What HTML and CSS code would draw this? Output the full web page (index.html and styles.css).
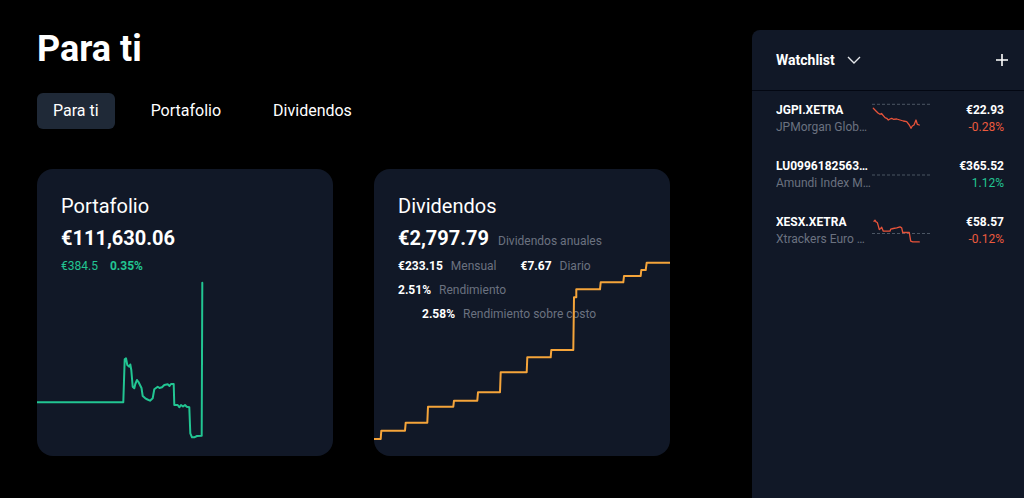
FILE: index.html
```html
<!DOCTYPE html>
<html lang="es">
<head>
<meta charset="utf-8">
<title>Para ti</title>
<link rel="stylesheet" href="styles.css">
</head>
<body>
<div class="page">
  <main class="main">
    <h1 class="title">Para ti</h1>
    <nav class="tabs">
      <button class="tab active">Para ti</button>
      <button class="tab">Portafolio</button>
      <button class="tab">Dividendos</button>
    </nav>
    <section class="cards">
      <article class="card">
        <h2 class="card-title">Portafolio</h2>
        <div class="card-value">€111,630.06</div>
        <div class="change green"><span>€384.5</span><b>0.35%</b></div>
        <svg class="chart" viewBox="0 0 296 287" preserveAspectRatio="none">
          <polyline class="line-green" points="0,233.3 86.3,233.3 87.7,190.3 89,189.3 90.3,196 92.3,197.7 93.3,195.5 94.3,201 95.7,217.7 97.3,219.3 98.3,215 100,211 101.5,213 103,216 104.5,219 105.7,227 108.3,229.3 110.5,230.5 113,231.7 115.7,229.3 117.3,220.3 120.7,217.7 122.5,219 125,218.3 127.3,216 130.7,215.3 132.5,217 134,215 136.7,215 137.3,236 140.7,236 142.3,238.3 144,236 146,237.5 148,236 149.7,237.7 152.3,238.3 153.3,264.3 155,268.3 157.3,268.3 160,267 164.7,266.7 165.3,113.7"/>
        </svg>
      </article>
      <article class="card">
        <h2 class="card-title">Dividendos</h2>
        <div class="card-value">€2,797.79<span class="muted value-label">Dividendos anuales</span></div>
        <div class="stat-line">
          <span class="stat"><b>€233.15</b><span class="muted">Mensual</span></span>
          <span class="stat"><b>€7.67</b><span class="muted">Diario</span></span>
        </div>
        <div class="stat-line">
          <span class="stat"><b>2.51%</b><span class="muted">Rendimiento</span></span>
        </div>
        <div class="stat-line indent">
          <span class="stat"><b>2.58%</b><span class="muted">Rendimiento sobre costo</span></span>
        </div>
        <svg class="chart" viewBox="0 0 296 287" preserveAspectRatio="none">
          <polyline class="line-orange" points="0,270 6.7,270 7.3,261.7 31,261.7 31.7,253.7 53.3,253.7 54,237.7 79.3,237.7 80,231.7 103.3,231.7 104,223.3 126,223.3 126.7,203.3 152.7,203.3 153.3,188.3 176.7,188.3 177.3,181 199.3,181 200,128.3 202.3,128.3 202.3,120.3 226,120.3 226.7,113.3 249.3,113.3 250,107 266.7,107 267.3,101 271.7,101 272.7,93.7 296,93.7"/>
        </svg>
      </article>
    </section>
  </main>

  <aside class="watchlist">
    <header class="wl-header">
      <span class="wl-title">Watchlist</span>
      <svg class="chevron" viewBox="0 0 14 8" width="14" height="8"><polyline points="1,1 7,7 13,1"/></svg>
      <svg class="plus" viewBox="0 0 12 12" width="12" height="12"><path d="M6 0V12M0 6H12"/></svg>
    </header>
    <div class="wl-row">
      <div class="wl-name">
        <div class="sym">JGPI.XETRA</div>
        <div class="desc">JPMorgan Global Equity Premium Income</div>
      </div>
      <svg class="spark" viewBox="0 0 60 32" width="60" height="32">
        <line class="ref" x1="0" y1="1.3" x2="60" y2="1.3"/>
        <polyline class="line-red" points="1.3,5.3 4.7,8.7 6.3,10.3 8,11.3 9.5,10.5 11.3,12.7 13,14.7 14.7,15.3 16.3,17 18,16 19.7,15.3 21.3,16.3 24.7,16 28,17 31.3,18 34.7,18.7 37.3,22 39,25.3 40.3,23 42,22 44,17 45.3,21.3 47.3,22"/>
      </svg>
      <div class="wl-price">
        <div class="price">€22.93</div>
        <div class="pct red">-0.28%</div>
      </div>
    </div>
    <div class="wl-row">
      <div class="wl-name">
        <div class="sym">LU0996182563.XETRA</div>
        <div class="desc">Amundi Index MSCI World</div>
      </div>
      <svg class="spark" viewBox="0 0 60 32" width="60" height="32">
        <line class="ref" x1="0" y1="16" x2="60" y2="16"/>
      </svg>
      <div class="wl-price">
        <div class="price">€365.52</div>
        <div class="pct green">1.12%</div>
      </div>
    </div>
    <div class="wl-row">
      <div class="wl-name">
        <div class="sym">XESX.XETRA</div>
        <div class="desc">Xtrackers Euro Stoxx 50</div>
      </div>
      <svg class="spark" viewBox="0 0 60 32" width="60" height="32">
        <line class="ref" x1="0" y1="18.5" x2="60" y2="18.5"/>
        <polyline class="line-red" points="2,6.2 3,5.2 4,6.9 5.3,7.5 6.3,10.9 7.3,14.5 8.7,13.5 9.7,12.2 11.3,16.2 18,16.2 18.7,14.2 21.3,13.5 24.7,12.9 28,11.9 29.7,12.9 30.7,17.5 37.3,17.5 38,21.9 38.7,26.2 40.7,26.9 47.3,26.9"/>
      </svg>
      <div class="wl-price">
        <div class="price">€58.57</div>
        <div class="pct red">-0.12%</div>
      </div>
    </div>
  </aside>
</div>
</body>
</html>
```

FILE: styles.css
```css
* { box-sizing: border-box; }

html, body {
  margin: 0;
  padding: 0;
  background: #000;
  color: #fff;
  font-family: Roboto, "Liberation Sans", Arial, sans-serif;
  height: 100%;
  overflow: hidden;
}

.page {
  display: flex;
  height: 100vh;
}

.main {
  flex: 1;
  padding: 27px 0 0 37px;
}

.title {
  margin: 0;
  font-size: 36px;
  line-height: 44px;
  font-weight: 700;
}

.tabs {
  display: flex;
  gap: 20px;
  margin-top: 22px;
}

.tab {
  height: 36px;
  padding: 0 16px;
  border: none;
  border-radius: 6px;
  background: transparent;
  color: #fff;
  font-family: inherit;
  font-size: 16px;
  line-height: 36px;
}

.tab.active {
  background: #1f2937;
}

.cards {
  display: flex;
  gap: 41px;
  margin-top: 40px;
}

.card {
  position: relative;
  width: 296px;
  height: 287px;
  padding: 23px 24px 0;
  background: #111827;
  border-radius: 16px;
  overflow: hidden;
}

.card-title {
  margin: 0;
  font-size: 20px;
  line-height: 28px;
  font-weight: 400;
}

.card-value {
  margin-top: 4px;
  height: 28px;
  font-size: 20px;
  line-height: 28px;
  font-weight: 700;
}

.value-label {
  margin-left: 9px;
  font-size: 12px;
  line-height: 1;
  font-weight: 400;
}

.muted {
  color: #6b7280;
}

.change {
  display: flex;
  gap: 12px;
  margin-top: 2px;
  font-size: 12px;
  line-height: 24px;
}

.stat-line {
  display: flex;
  gap: 24px;
  font-size: 12px;
  line-height: 24px;
}

.card-value + .stat-line { margin-top: 2px; }

.stat-line.indent { padding-left: 24px; }

.stat {
  display: flex;
  gap: 8px;
}

.chart {
  position: absolute;
  left: 0;
  top: 0;
  width: 296px;
  height: 287px;
  pointer-events: none;
}

.chart polyline, .spark polyline {
  fill: none;
  stroke-linejoin: round;
  stroke-linecap: round;
}

.line-green { stroke: #22c592; stroke-width: 2; }
.line-orange { stroke: #f5a43a; stroke-width: 2; }
.line-red { stroke: #e8533a; stroke-width: 1.3; }

.green { color: #22c592; }
.red { color: #ec5a3e; }

.watchlist {
  flex: none;
  width: 272px;
  margin-top: 30px;
  background: #111827;
  border-top-left-radius: 8px;
}

.wl-header {
  display: flex;
  align-items: center;
  height: 61px;
  padding: 0 16px 0 24px;
  border-bottom: 1px solid #030712;
}

.wl-title {
  font-size: 14px;
  font-weight: 700;
}

.chevron {
  margin-left: 12px;
  fill: none;
  stroke: #e5e7eb;
  stroke-width: 1.4;
}

.plus {
  margin-left: auto;
  fill: none;
  stroke: #fff;
  stroke-width: 1.6;
}

.wl-row {
  display: flex;
  align-items: center;
  height: 56px;
  padding: 0 20px 0 24px;
  font-size: 12px;
  line-height: 17px;
}

.wl-name {
  flex: none;
  width: 95px;
  margin-right: 1px;
  min-width: 0;
}

.sym, .desc {
  white-space: nowrap;
  overflow: hidden;
  text-overflow: ellipsis;
}

.sym { font-weight: 700; }
.desc { color: #6b7280; }

.spark { flex: none; }

.spark .ref {
  stroke: #4b5563;
  stroke-width: 1;
  stroke-dasharray: 3 2;
}

.wl-price {
  flex: 1;
  min-width: 0;
  text-align: right;
}

.price { font-weight: 700; }
```
